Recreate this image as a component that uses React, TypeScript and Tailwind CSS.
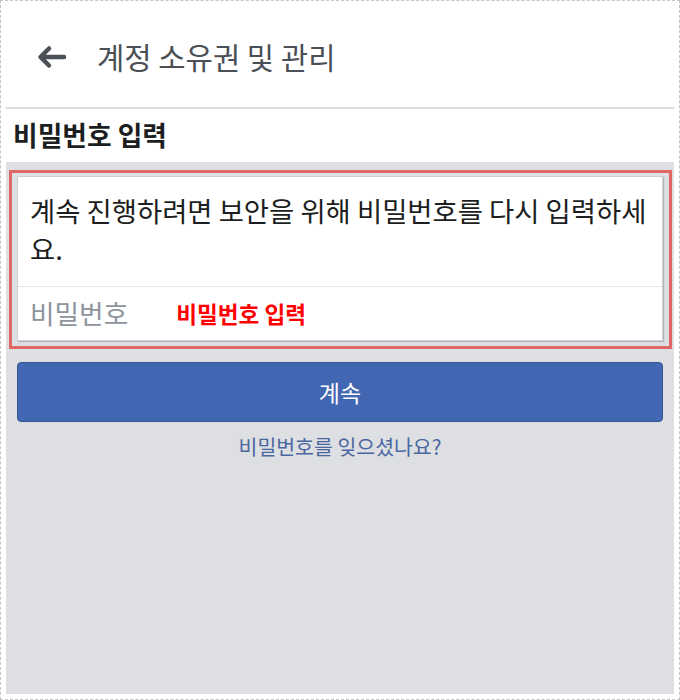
import React from "react";

export default function App() {
  return (
    <div
      className="w-[680px] h-[700px] border border-dashed border-[#c4c4c4] p-[5px] pb-[5px] bg-white flex flex-col"
      style={{ fontFamily: '"Noto Sans CJK KR", "Noto Sans", sans-serif' }}
    >
      <div className="h-[101px] flex items-center pl-[30px] shrink-0">
        <svg width="32" height="24" viewBox="0 0 32 24" className="mr-[29px] mt-[1px]">
          <path
            d="M28 12H5M13 3.5L4.5 12L13 20.5"
            fill="none"
            stroke="#4b4f56"
            strokeWidth="4.5"
            strokeLinecap="round"
            strokeLinejoin="round"
          />
        </svg>
        <span className="text-[29.7px] text-[#4b4f56] leading-none">계정 소유권 및 관리</span>
      </div>
      <div className="h-[2px] bg-[#dadde1] shrink-0" />
      <div className="h-[53px] flex items-center pl-[7px] shrink-0">
        <span className="text-[26.8px] font-bold text-[#1c1e21] leading-none">비밀번호 입력</span>
      </div>
      <div className="flex-1 bg-[#dddfe2] px-[11px] pt-[14px] flex flex-col">
        <div className="relative">
          <div className="absolute left-[-8px] right-[-9px] top-[-6px] bottom-[-8px] border-[3px] border-[#e06666] pointer-events-none" />
          <div className="bg-white border border-[#ccd0d5] shadow-[1px_1px_1px_rgba(0,0,0,0.18)]">
            <div className="pl-[12px] pr-[6px] pt-[14px] pb-[19px] text-[27.4px] leading-[38px] text-[#1c1e21]">
              계속 진행하려면 보안을 위해 비밀번호를 다시 입력하세요.
            </div>
            <div className="h-[1px] bg-[#e4e6eb]" />
            <div className="h-[53px] flex items-center pl-[12px]">
              <span className="text-[26.7px] text-[#8d949e] leading-none">비밀번호</span>
              <span className="ml-[48px] text-[22.6px] font-bold text-[#ff0000] leading-none mt-[2px]">비밀번호 입력</span>
            </div>
          </div>
        </div>
        <div className="mt-[21px] h-[60px] rounded-[4px] bg-[#4267b2] border border-[#365899] flex items-center justify-center">
          <span className="text-[23px] text-white leading-none">계속</span>
        </div>
        <div className="mt-[14px] text-center text-[20.5px] text-[#4b67a1] leading-none">
          비밀번호를 잊으셨나요?
        </div>
      </div>
    </div>
  );
}
